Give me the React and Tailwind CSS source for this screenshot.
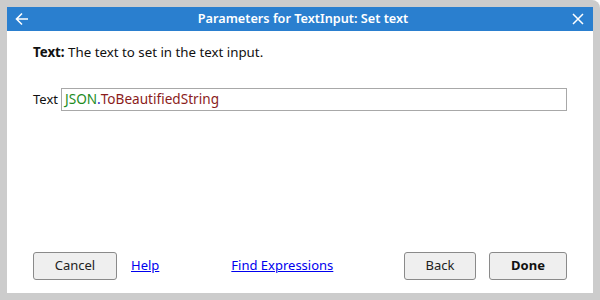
import React from "react";

const font = { fontFamily: '"Noto Sans", "Open Sans", sans-serif' };

const App = () => {
  return (
    <div
      className="w-[600px] h-[300px] bg-[#cccccc] p-[7px] rounded-tr-[8px]"
      style={font}
    >
      <div className="flex h-full flex-col bg-white">
        <div className="flex h-[24px] items-center bg-[#2a7fcf] px-[7px] text-white">
          <svg width="16" height="16" viewBox="0 0 16 16" className="shrink-0">
            <path
              d="M14 8H2.5M8 2.5L2.5 8L8 13.5"
              stroke="white"
              strokeWidth="1.6"
              fill="none"
            />
          </svg>
          <div className="flex-1 pl-[4px] text-center text-[12.7px] font-semibold">
            Parameters for TextInput: Set text
          </div>
          <svg width="12" height="12" viewBox="0 0 12 12" className="shrink-0 mr-[2px]">
            <path d="M1 1L11 11M11 1L1 11" stroke="white" strokeWidth="1.5" />
          </svg>
        </div>

        <div className="flex-1 px-[26px] pt-[12px] text-[13.3px] text-[#111]">
          <p>
            <span className="font-bold">Text:</span> The text to set in the text input.
          </p>
          <div className="mt-[25px] flex items-center">
            <span className="mr-[3px] text-[13px]">Text</span>
            <div className="flex h-[23px] flex-1 items-center border border-[#a8a8a8] px-[3px] text-[13.6px]">
              <span className="text-[#1e8c1e]">JSON</span>
              <span className="text-[#2222cc]">.</span>
              <span className="text-[#8b1c1c]">ToBeautifiedString</span>
            </div>
          </div>
        </div>

        <div className="flex items-center px-[26px] pb-[13px] text-[13px]">
          <button className="h-[28px] w-[84px] rounded-[3px] border border-[#8a8a8a] bg-[#efefef] text-[#222]">
            Cancel
          </button>
          <a href="#" className="ml-[14px] text-[#0000ee] underline">
            Help
          </a>
          <a href="#" className="ml-[72px] text-[#0000ee] underline">
            Find Expressions
          </a>
          <div className="flex-1" />
          <button className="h-[28px] w-[72px] rounded-[3px] border border-[#8a8a8a] bg-[#efefef] text-[#222]">
            Back
          </button>
          <button className="ml-[13px] h-[28px] w-[78px] rounded-[3px] border border-[#8a8a8a] bg-[#efefef] font-bold text-[#111]">
            Done
          </button>
        </div>
      </div>
    </div>
  );
};

export default App;
